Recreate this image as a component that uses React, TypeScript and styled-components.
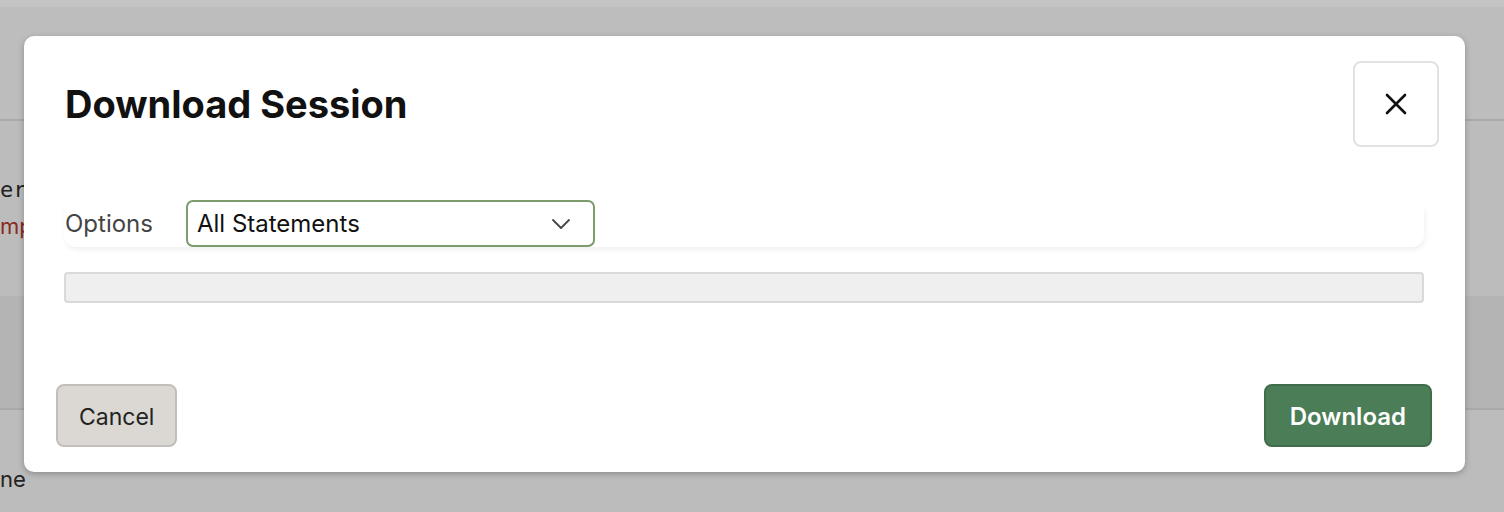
import React from "react";
import styled, { createGlobalStyle } from "styled-components";

const Global = createGlobalStyle`
  html, body { margin: 0; padding: 0; }
  body { background: #bdbdbd; font-family: Inter, "Liberation Sans", sans-serif; }
`;

const Page = styled.div`
  position: relative;
  width: 1504px;
  height: 512px;
  overflow: hidden;
  background: #bdbdbd;
  display: flex;
  flex-direction: column;
`;

const TopStrip = styled.div`
  height: 8px;
  background: #c4c4c4;
`;

const Band = styled.div<{ $h: number; $bg: string; $line?: boolean }>`
  height: ${(p) => p.$h}px;
  background: ${(p) => p.$bg};
  border-bottom: ${(p) => (p.$line ? "2px solid #a9a9a9" : "none")};
  position: relative;
  flex-shrink: 0;
`;

const BgText = styled.span<{ $top: number; $color: string; $mono?: boolean }>`
  position: absolute;
  left: 0;
  top: ${(p) => p.$top}px;
  white-space: nowrap;
  font-family: ${(p) => (p.$mono ? '"DejaVu Sans Mono", monospace' : 'Inter, sans-serif')};
  font-size: 22px;
  color: ${(p) => p.$color};
`;

const Dialog = styled.div`
  position: absolute;
  left: 24px;
  top: 36px;
  width: 1441px;
  height: 436px;
  box-sizing: border-box;
  background: #fff;
  border-radius: 10px;
  box-shadow: 0 2px 6px rgba(0, 0, 0, 0.25);
  display: flex;
  flex-direction: column;
`;

const Header = styled.div`
  display: flex;
  align-items: center;
  justify-content: space-between;
  padding: 25px 26px 0 41px;
`;

const Title = styled.h2`
  margin: 0;
  font-family: Inter, "Liberation Sans", sans-serif;
  font-weight: 700;
  font-size: 38px;
  letter-spacing: 0;
  color: #111;
`;

const CloseButton = styled.button`
  width: 86px;
  height: 86px;
  box-sizing: border-box;
  border: 2px solid #e2e2e2;
  border-radius: 8px;
  background: #fff;
  display: flex;
  align-items: center;
  justify-content: center;
  padding: 0;
`;

const Body = styled.div`
  padding: 53px 41px 0 40px;
  display: flex;
  flex-direction: column;
  gap: 25px;
`;

const OptionsRow = styled.div`
  display: flex;
  align-items: center;
  gap: 33px;
  height: 47px;
  border-radius: 12px;
  box-shadow: 1px 3px 5px rgba(0, 0, 0, 0.06);
`;

const Label = styled.span`
  font-family: Inter, "Liberation Sans", sans-serif;
  font-size: 24px;
  color: #444;
  padding-left: 1px;
`;

const Select = styled.div`
  width: 409px;
  height: 47px;
  box-sizing: border-box;
  border: 2px solid #7c9c6c;
  border-radius: 7px;
  display: flex;
  align-items: center;
  justify-content: space-between;
  padding: 0 22px 0 9px;
  font-family: Inter, "Liberation Sans", sans-serif;
  font-size: 24px;
  color: #111;
`;

const Progress = styled.div`
  height: 31px;
  box-sizing: border-box;
  background: #efefef;
  border: 2px solid #d9d9d9;
  border-radius: 4px;
`;

const Footer = styled.div`
  margin-top: auto;
  display: flex;
  justify-content: space-between;
  padding: 0 33px 25px 32px;
`;

const Button = styled.button<{ $primary?: boolean }>`
  height: 63px;
  box-sizing: border-box;
  border-radius: 8px;
  padding: 2px ${(p) => (p.$primary ? "24px" : "21px")} 0;
  font-family: Inter, "Liberation Sans", sans-serif;
  font-size: ${(p) => (p.$primary ? "24px" : "23px")};
  font-weight: ${(p) => (p.$primary ? 600 : 400)};
  color: ${(p) => (p.$primary ? "#fff" : "#222")};
  background: ${(p) => (p.$primary ? "#4b7d57" : "#dbd8d4")};
  border: 2px solid ${(p) => (p.$primary ? "#3f6c4a" : "#c2beb9")};
`;

export default function App() {
  return (
    <>
      <Global />
      <Page>
        <TopStrip />
        <Band $h={112} $bg="#bdbdbd" $line />
        <Band $h={175} $bg="#bcbcbc">
          <BgText $top={56} $color="#222" $mono>er</BgText>
          <BgText $top={92} $color="#8a2a1e">mpare</BgText>
        </Band>
        <Band $h={112} $bg="#b4b4b4" $line />
        <Band $h={102} $bg="#bcbcbc">
          <BgText $top={56} $color="#222">ne</BgText>
        </Band>
        <Dialog>
          <Header>
            <Title>Download Session</Title>
            <CloseButton aria-label="Close">
              <svg width="24" height="24" viewBox="0 0 24 24" fill="none" stroke="#111" strokeWidth="2.6" strokeLinecap="round">
                <path d="M3 3 L21 21 M21 3 L3 21" />
              </svg>
            </CloseButton>
          </Header>
          <Body>
            <OptionsRow>
              <Label>Options</Label>
              <Select>
                <span>All Statements</span>
                <svg width="20" height="12" viewBox="0 0 20 12" fill="none" stroke="#444" strokeWidth="1.8" strokeLinecap="round" strokeLinejoin="round">
                  <path d="M2 2 L10 10 L18 2" />
                </svg>
              </Select>
            </OptionsRow>
            <Progress />
          </Body>
          <Footer>
            <Button>Cancel</Button>
            <Button $primary>Download</Button>
          </Footer>
        </Dialog>
      </Page>
    </>
  );
}
